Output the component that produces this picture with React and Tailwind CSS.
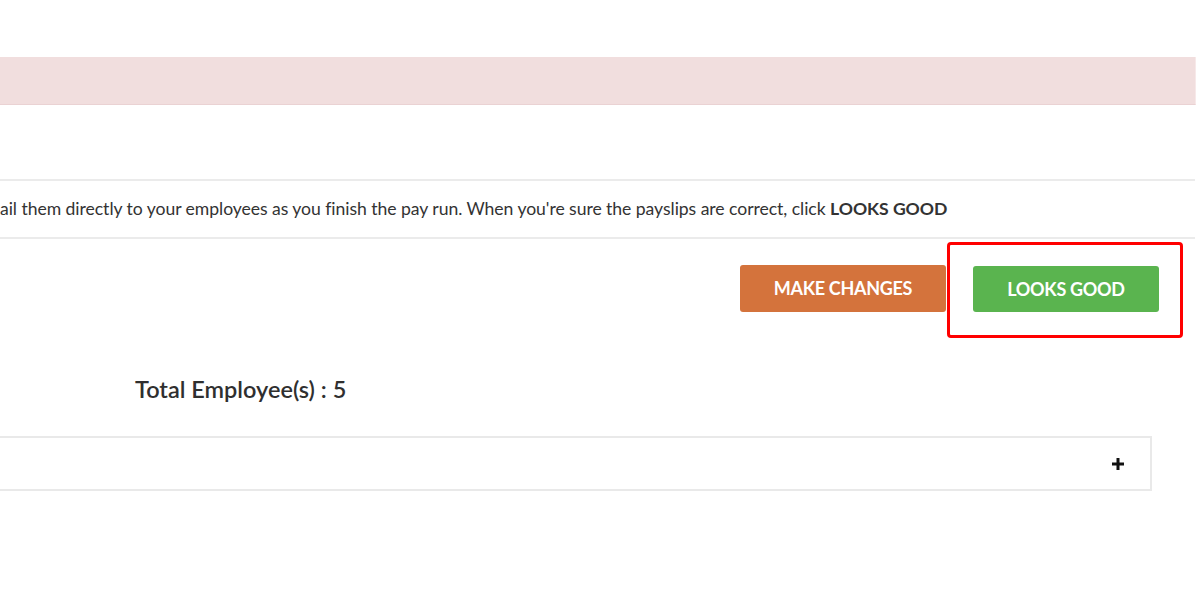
import React from 'react';

export default function App() {
  return (
    <div className="w-[1200px] h-[600px] bg-white overflow-hidden font-['Lato','Liberation_Sans',sans-serif] text-[#333]">
      <div className="pt-[57px] w-[1196px]">
        <div className="h-[48px] bg-[#f1dede] border-b border-[#ead2d3] border-r border-r-[#f7e9e9]" />
      </div>

      <div className="mt-[74px] w-[1195px] border-t-2 border-b-2 border-[#ebebeb] h-[60px] flex items-center">
        <p className="text-[17.6px] whitespace-nowrap tracking-[-0.05px]">
          ail them directly to your employees as you finish the pay run. When you're sure the payslips are correct, click{' '}
          <span className="font-bold">LOOKS GOOD</span>
        </p>
      </div>

      <div className="flex justify-end items-start w-[1159px] gap-[27px] mt-[26px]">
        <button
          type="button"
          className="w-[206px] h-[47px] rounded-[3px] bg-[#d4733c] text-white font-bold text-[18px] tracking-[-0.3px]"
        >
          MAKE CHANGES
        </button>
        <div className="relative mt-px">
          <button
            type="button"
            className="w-[186px] h-[46px] rounded-[3px] bg-[#5ab44f] text-white font-bold text-[18px] tracking-[-0.3px]"
          >
            LOOKS GOOD
          </button>
          <div className="absolute left-[-26px] top-[-24px] w-[236px] h-[96px] border-[3px] border-[#ff0000] rounded-[4px]" />
        </div>
      </div>

      <div className="mt-[63px] pl-[135px] text-[23.5px] leading-[28px] font-semibold text-[#2f2f2f]">
        Total Employee(s) : 5
      </div>

      <div className="mt-[33px] w-[1152px] h-[55px] border-2 border-l-0 border-[#e9e9e9] flex items-center justify-end pr-[26px]">
        <svg width="12" height="12" viewBox="0 0 12 12">
          <path d="M4.5 0h3v4.5H12v3H7.5V12h-3V7.5H0v-3h4.5z" fill="#111" />
        </svg>
      </div>
    </div>
  );
}
